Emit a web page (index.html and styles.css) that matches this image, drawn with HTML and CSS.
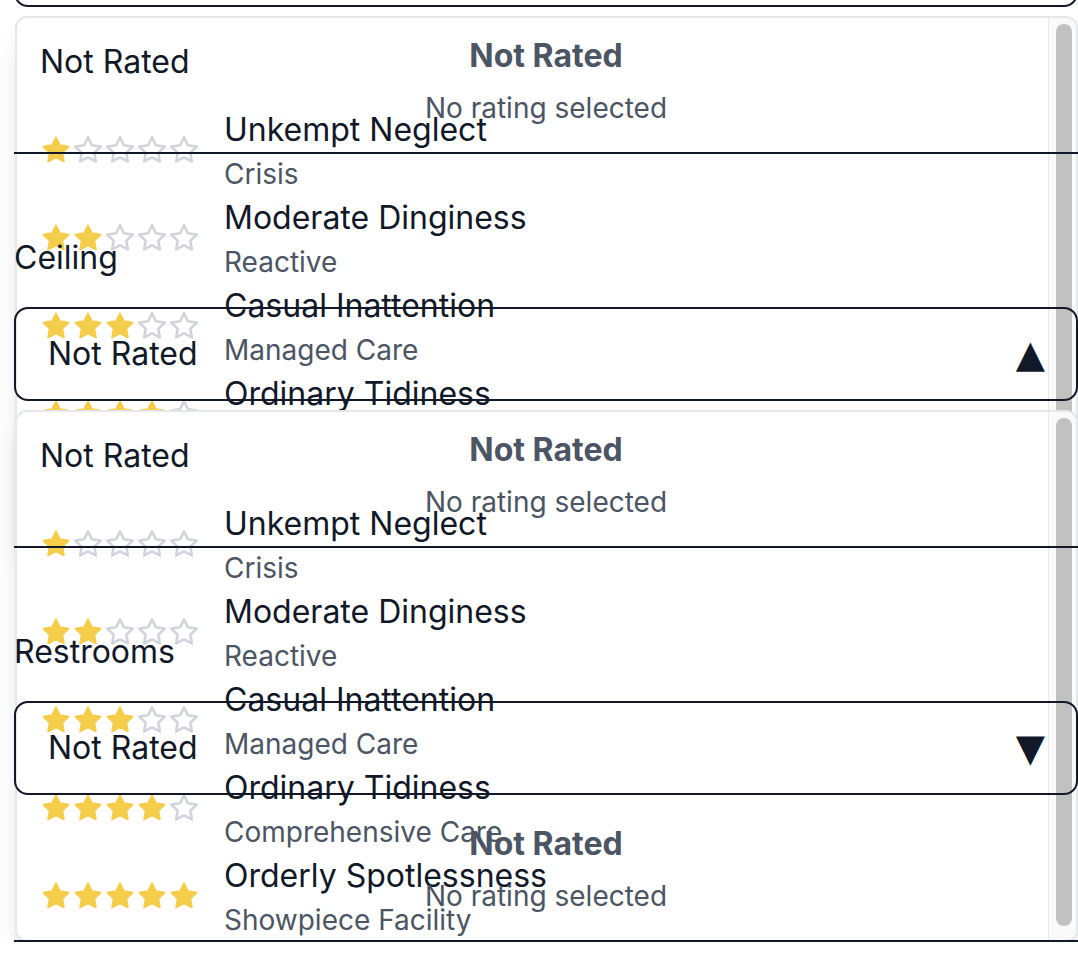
FILE: index.html
```html
<!DOCTYPE html>
<html lang="en">
<head>
<meta charset="utf-8">
<title>Ratings</title>
<link rel="stylesheet" href="styles.css">
</head>
<body>
<svg class="defs" aria-hidden="true">
  <symbol id="star" viewBox="1 1 22 22">
    <polygon points="12,2 15.09,8.26 22,9.27 17,14.14 18.18,21.02 12,17.77 5.82,21.02 7,14.14 2,9.27 8.91,8.26"/>
  </symbol>
</svg>
<div class="page">
  <div class="row row--first">
    <div class="select-wrap">
      <button class="select" type="button"><span>Not Rated</span><span class="arrow">▲</span></button>
      <div class="panel">
        <div class="options">
          <div class="option"><span class="opt-none">Not Rated</span></div>
          <div class="option">
            <div class="stars"><svg class="star on"><use href="#star"/></svg><svg class="star"><use href="#star"/></svg><svg class="star"><use href="#star"/></svg><svg class="star"><use href="#star"/></svg><svg class="star"><use href="#star"/></svg></div>
            <div class="opt-text"><div class="opt-title">Unkempt Neglect</div><div class="opt-sub">Crisis</div></div>
          </div>
          <div class="option">
            <div class="stars"><svg class="star on"><use href="#star"/></svg><svg class="star on"><use href="#star"/></svg><svg class="star"><use href="#star"/></svg><svg class="star"><use href="#star"/></svg><svg class="star"><use href="#star"/></svg></div>
            <div class="opt-text"><div class="opt-title">Moderate Dinginess</div><div class="opt-sub">Reactive</div></div>
          </div>
          <div class="option">
            <div class="stars"><svg class="star on"><use href="#star"/></svg><svg class="star on"><use href="#star"/></svg><svg class="star on"><use href="#star"/></svg><svg class="star"><use href="#star"/></svg><svg class="star"><use href="#star"/></svg></div>
            <div class="opt-text"><div class="opt-title">Casual Inattention</div><div class="opt-sub">Managed Care</div></div>
          </div>
          <div class="option">
            <div class="stars"><svg class="star on"><use href="#star"/></svg><svg class="star on"><use href="#star"/></svg><svg class="star on"><use href="#star"/></svg><svg class="star on"><use href="#star"/></svg><svg class="star"><use href="#star"/></svg></div>
            <div class="opt-text"><div class="opt-title">Ordinary Tidiness</div><div class="opt-sub">Comprehensive Care</div></div>
          </div>
          <div class="option">
            <div class="stars"><svg class="star on"><use href="#star"/></svg><svg class="star on"><use href="#star"/></svg><svg class="star on"><use href="#star"/></svg><svg class="star on"><use href="#star"/></svg><svg class="star on"><use href="#star"/></svg></div>
            <div class="opt-text"><div class="opt-title">Orderly Spotlessness</div><div class="opt-sub">Showpiece Facility</div></div>
          </div>
        </div>
        <div class="scrollbar"><div class="thumb"></div></div>
      </div>
    </div>
    <div class="summary"><div class="sum-title">Not Rated</div><div class="sum-sub">No rating selected</div></div>
  </div>

  <div class="row">
    <div class="label">Ceiling</div>
    <div class="select-wrap">
      <button class="select" type="button"><span>Not Rated</span><span class="arrow">▲</span></button>
      <div class="panel">
        <div class="options">
          <div class="option"><span class="opt-none">Not Rated</span></div>
          <div class="option">
            <div class="stars"><svg class="star on"><use href="#star"/></svg><svg class="star"><use href="#star"/></svg><svg class="star"><use href="#star"/></svg><svg class="star"><use href="#star"/></svg><svg class="star"><use href="#star"/></svg></div>
            <div class="opt-text"><div class="opt-title">Unkempt Neglect</div><div class="opt-sub">Crisis</div></div>
          </div>
          <div class="option">
            <div class="stars"><svg class="star on"><use href="#star"/></svg><svg class="star on"><use href="#star"/></svg><svg class="star"><use href="#star"/></svg><svg class="star"><use href="#star"/></svg><svg class="star"><use href="#star"/></svg></div>
            <div class="opt-text"><div class="opt-title">Moderate Dinginess</div><div class="opt-sub">Reactive</div></div>
          </div>
          <div class="option">
            <div class="stars"><svg class="star on"><use href="#star"/></svg><svg class="star on"><use href="#star"/></svg><svg class="star on"><use href="#star"/></svg><svg class="star"><use href="#star"/></svg><svg class="star"><use href="#star"/></svg></div>
            <div class="opt-text"><div class="opt-title">Casual Inattention</div><div class="opt-sub">Managed Care</div></div>
          </div>
          <div class="option">
            <div class="stars"><svg class="star on"><use href="#star"/></svg><svg class="star on"><use href="#star"/></svg><svg class="star on"><use href="#star"/></svg><svg class="star on"><use href="#star"/></svg><svg class="star"><use href="#star"/></svg></div>
            <div class="opt-text"><div class="opt-title">Ordinary Tidiness</div><div class="opt-sub">Comprehensive Care</div></div>
          </div>
          <div class="option">
            <div class="stars"><svg class="star on"><use href="#star"/></svg><svg class="star on"><use href="#star"/></svg><svg class="star on"><use href="#star"/></svg><svg class="star on"><use href="#star"/></svg><svg class="star on"><use href="#star"/></svg></div>
            <div class="opt-text"><div class="opt-title">Orderly Spotlessness</div><div class="opt-sub">Showpiece Facility</div></div>
          </div>
        </div>
        <div class="scrollbar"><div class="thumb"></div></div>
      </div>
    </div>
    <div class="summary"><div class="sum-title">Not Rated</div><div class="sum-sub">No rating selected</div></div>
  </div>

  <div class="row">
    <div class="label">Restrooms</div>
    <div class="select-wrap">
      <button class="select" type="button"><span>Not Rated</span><span class="arrow">▼</span></button>
    </div>
    <div class="summary"><div class="sum-title">Not Rated</div><div class="sum-sub">No rating selected</div></div>
  </div>
</div>
</body>
</html>
```

FILE: styles.css
```css
* { box-sizing: border-box; }

html, body {
  margin: 0;
  background: #ffffff;
}

body {
  font-family: Inter, "Noto Sans", "Liberation Sans", sans-serif;
  color: #111827;
  overflow: hidden;
}

.defs {
  position: absolute;
  width: 0;
  height: 0;
  overflow: hidden;
}

.page {
  width: 1064px;
  margin: -87px 0 0 14px;
}

.row {
  position: relative;
  padding: 82px 0 24px;
}

.row::after {
  content: "";
  position: absolute;
  left: 0;
  right: 0;
  bottom: 0;
  height: 2px;
  background: #111827;
  z-index: 2;
}

.row--first {
  padding-top: 0;
}

.label {
  position: relative;
  z-index: 2;
  font-size: 32px;
  line-height: 44px;
  margin-bottom: 27px;
}

.select-wrap {
  position: relative;
}

.select {
  position: relative;
  z-index: 2;
  display: flex;
  align-items: center;
  justify-content: space-between;
  width: 100%;
  height: 94px;
  margin: 0;
  padding: 0 31px 0 32px;
  border: 2px solid #111827;
  border-radius: 14px;
  background: transparent;
  font-family: inherit;
  font-size: 32px;
  line-height: 44px;
  color: #111827;
  text-align: left;
}

.arrow {
  font-family: "DejaVu Sans", sans-serif;
  font-size: 38px;
  line-height: 1;
  color: #111827;
}

.panel {
  position: absolute;
  z-index: 1;
  top: calc(100% + 9px);
  left: 1px;
  right: 0;
  height: 532px;
  display: grid;
  grid-template-columns: 1fr 28px;
  overflow: hidden;
  background: #ffffff;
  border: 2px solid #e5e7eb;
  border-radius: 12px;
  box-shadow: 0 20px 30px -6px rgba(0, 0, 0, 0.10), 0 8px 14px -6px rgba(0, 0, 0, 0.08);
}

.scrollbar {
  background: #fafafa;
  border-left: 1px solid #e8e8e8;
  padding: 6px 4px 6px 7px;
}

.thumb {
  height: 508px;
  background: #c1c1c1;
  border-radius: 8px;
}

.option {
  display: flex;
  align-items: center;
  height: 88px;
  padding-left: 23px;
}

.opt-none {
  font-size: 32px;
  line-height: 44px;
  color: #111827;
}

.stars {
  display: flex;
  gap: 4px;
  margin-left: 2px;
  flex: none;
}

.star {
  width: 28px;
  height: 28px;
  fill: none;
  stroke: #d1d5db;
  stroke-width: 2;
  stroke-linejoin: round;
}

.star.on {
  fill: #f4cd4a;
  stroke: #f4cd4a;
  stroke-width: 1.4;
}

.opt-text {
  margin-left: 26px;
  padding-top: 4px;
}

.opt-title {
  font-size: 32px;
  line-height: 44px;
  color: #111827;
}

.opt-sub {
  font-size: 28px;
  line-height: 44px;
  color: #4b5563;
}

.summary {
  position: relative;
  z-index: 2;
  margin-top: 27px;
  text-align: center;
  color: #4b5563;
}

.sum-title {
  font-size: 32px;
  font-weight: 700;
  line-height: 44px;
}

.sum-sub {
  font-size: 28px;
  line-height: 44px;
  margin-top: 8px;
}
```
